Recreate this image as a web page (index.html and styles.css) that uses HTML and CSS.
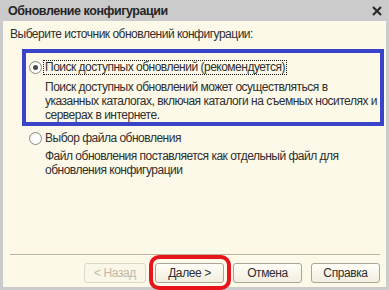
FILE: index.html
```html
<!DOCTYPE html>
<html lang="ru">
<head>
    <meta charset="UTF-8">
    <title>Обновление конфигурации</title>
    <link rel="stylesheet" href="styles.css">
</head>
<body>
    <div class="window">
        <div class="titlebar">
            <span class="title">Обновление конфигурации</span>
            <svg class="close" width="10" height="10" viewBox="0 0 10 10">
                <path d="M1 1 L9 9 M9 1 L1 9" stroke="#2b2b2b" stroke-width="2.2" fill="none"/>
            </svg>
        </div>
        <div class="content">
            <div class="prompt">Выберите источник обновлений конфигурации:</div>

            <div class="option option-marked">
                <div class="option-row">
                    <span class="radio checked"></span>
                    <span class="option-label focused">Поиск доступных обновлений (рекомендуется)</span>
                </div>
                <div class="option-desc">Поиск доступных обновлений может осуществляться в указанных каталогах, включая каталоги на съемных носителях и серверах в интернете.</div>
            </div>

            <div class="option option-plain">
                <div class="option-row">
                    <span class="radio"></span>
                    <span class="option-label">Выбор файла обновления</span>
                </div>
                <div class="option-desc">Файл обновления поставляется как отдельный файл для обновления конфигурации</div>
            </div>

            <div class="footer">
                <div class="separator"></div>
                <div class="buttons">
                    <button class="btn btn-back" disabled>&lt; Назад</button>
                    <button class="btn">Далее &gt;</button>
                    <button class="btn">Отмена</button>
                    <button class="btn">Справка</button>
                </div>
            </div>

            <div class="highlight"></div>
        </div>
    </div>
</body>
</html>
```

FILE: styles.css
```css
* {
    margin: 0;
    padding: 0;
    box-sizing: border-box;
}

body {
    font-family: 'Liberation Sans', Arial, sans-serif;
    font-size: 12px;
    letter-spacing: -0.5px;
    color: #2e2e2e;
    width: 389px;
    height: 290px;
    overflow: hidden;
}

.window {
    width: 389px;
    height: 290px;
    background: #cbcbcb;
    padding: 0 3px 3px;
    display: flex;
    flex-direction: column;
}

.titlebar {
    height: 21px;
    display: flex;
    align-items: center;
    justify-content: space-between;
    padding: 0 4px 0 5px;
}

.title {
    font-weight: bold;
    font-size: 12.5px;
    letter-spacing: -0.45px;
    color: #262626;
}

.close {
    display: block;
    margin-top: 1px;
}

.content {
    flex: 1;
    background: #fdf9e9;
    position: relative;
    display: flex;
    flex-direction: column;
}

.prompt {
    line-height: 15px;
    padding: 6px 0 0 7px;
}

.option-marked {
    margin: 7px 2px 0 19px;
    border: 4px solid #3a44c9;
    padding: 7px 0 0 3px;
    height: 77px;
}

.option-plain {
    margin: 5px 0 0 26px;
}

.option-row {
    display: flex;
    align-items: center;
    height: 15px;
}

.radio {
    width: 13px;
    height: 13px;
    border-radius: 50%;
    border: 1px solid #8c8a84;
    background: radial-gradient(circle at 60% 60%, #ffffff 40%, #e6e3da 100%);
    display: flex;
    align-items: center;
    justify-content: center;
    flex-shrink: 0;
}

.radio.checked::after {
    content: '';
    width: 5px;
    height: 5px;
    border-radius: 50%;
    background: #4a4a4a;
}

.option-label {
    margin-left: 1px;
    padding: 0 1px;
    line-height: 13px;
    border: 1px solid transparent;
}

.option-label.focused {
    border: 1px dotted #1a1a1a;
}

.option-desc {
    padding-left: 16px;
    line-height: 14px;
    margin-top: 5px;
}

.option-plain .option-desc {
    margin-top: 3px;
}

.footer {
    margin-top: auto;
    padding: 0 6px 4px 7px;
}

.separator {
    border-top: 1px solid #bdb196;
    border-bottom: 1px solid #fffdf5;
}

.buttons {
    display: flex;
    justify-content: flex-end;
    gap: 9px;
    margin-top: 7px;
}

.btn {
    font-family: 'Liberation Sans', Arial, sans-serif;
    font-size: 12px;
    letter-spacing: -0.4px;
    color: #2e2e2e;
    width: 69px;
    height: 20px;
    border: 1px solid #a9a496;
    border-radius: 3px;
    background: linear-gradient(#fffef8, #f2eedf);
}

.btn-back {
    width: 62px;
    color: #bfb8a2;
    border-color: #ddd8c8;
    background: #fbf7e8;
}

.highlight {
    position: absolute;
    left: 146px;
    top: 234px;
    width: 82px;
    height: 35px;
    border: 4px solid #e8141c;
    border-radius: 10px;
}
```
